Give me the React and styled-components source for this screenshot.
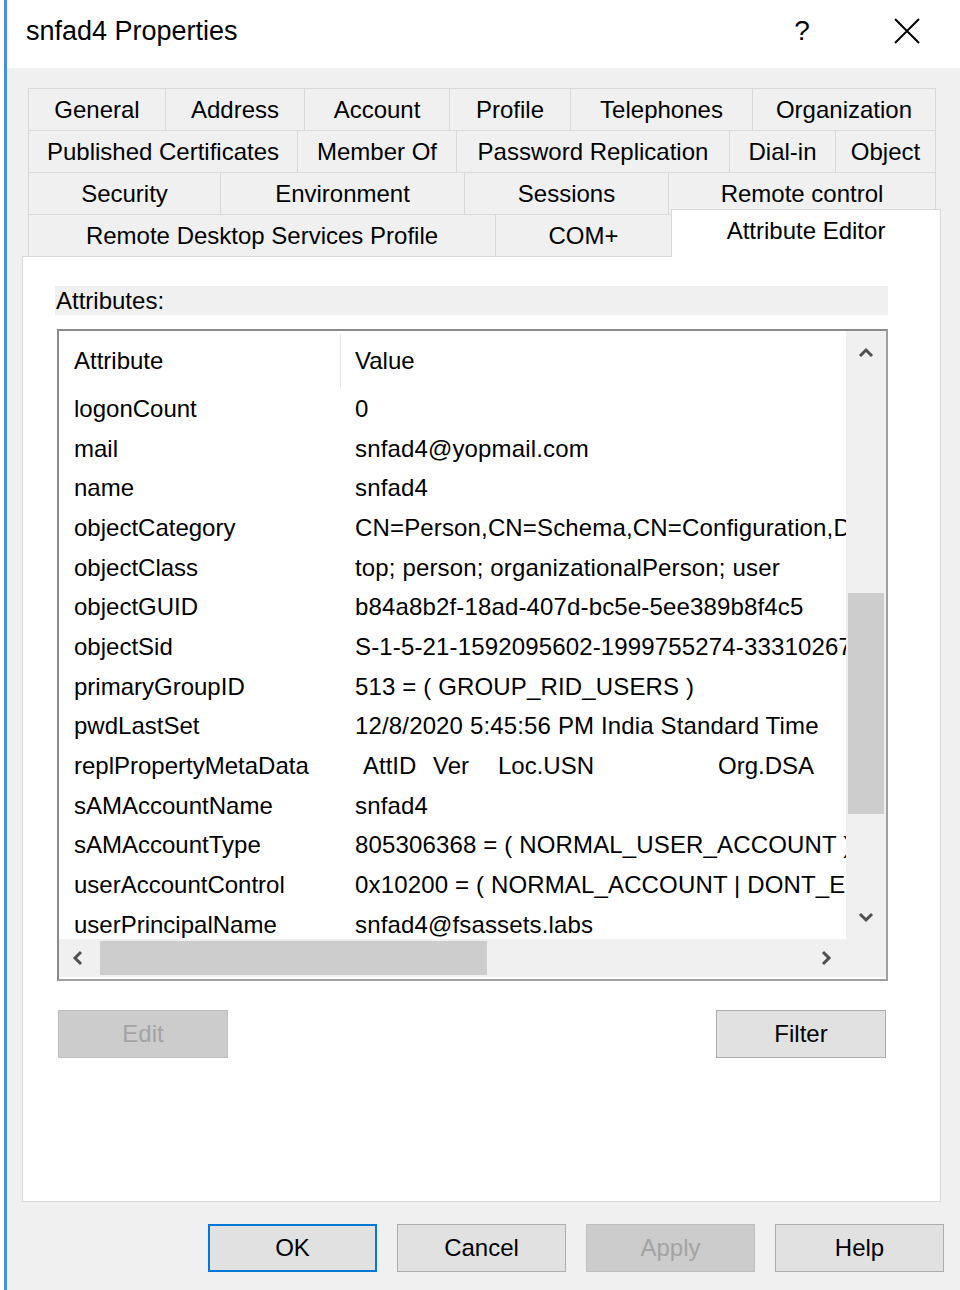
import styled, { createGlobalStyle } from 'styled-components';

const FONT = `"Liberation Sans", Arial, sans-serif`;

const GlobalStyle = createGlobalStyle`
  html, body {
    margin: 0;
    padding: 0;
    background: #ffffff;
  }
  * {
    box-sizing: border-box;
  }
`;

const Window = styled.div`
  margin-left: 4px;
  width: 956px;
  height: 1290px;
  border-left: 3px solid #4a8fdf;
  display: flex;
  flex-direction: column;
  font-family: ${FONT};
  color: #000;
`;

const TitleBar = styled.div`
  height: 68px;
  background: #fff;
  display: flex;
  align-items: center;
  padding: 0 3px 6px 19px;
`;

const Title = styled.div`
  flex: 1;
  font-size: 27px;
`;

const CaptionButton = styled.div`
  width: ${(p) => p.$w}px;
  height: 50px;
  display: flex;
  align-items: center;
  justify-content: center;
  font-size: 28px;
`;

const Body = styled.div`
  flex: 1;
  background: #f0f0f0;
  display: flex;
  flex-direction: column;
  padding: 20px 19px 0 15px;
`;

const Tabs = styled.div`
  display: flex;
  flex-direction: column;
  padding-left: 6px;
`;

const TabRow = styled.div`
  display: flex;
  height: 42px;
  align-items: flex-end;
`;

const Tab = styled.div`
  width: ${(p) => p.$w}px;
  height: 42px;
  border-top: 1px solid #d9d9d9;
  border-left: 1px solid #d9d9d9;
  background: #f0f0f0;
  display: flex;
  align-items: center;
  justify-content: center;
  font-size: 24px;
  white-space: nowrap;
  &:last-child {
    border-right: 1px solid #d9d9d9;
  }
`;

const ActiveTab = styled(Tab)`
  height: 48px;
  margin-bottom: -1px;
  background: #fff;
  border: 1px solid #d9d9d9;
  border-bottom: none;
  position: relative;
  z-index: 1;
  padding-bottom: 6px;
`;

const Panel = styled.div`
  height: 946px;
  background: #fff;
  border: 1px solid #d9d9d9;
  padding: 29px 0 0 32px;
  display: flex;
  flex-direction: column;
`;

const GroupLabel = styled.div`
  width: 833px;
  height: 29px;
  background: #f0f0f0;
  font-size: 24px;
  line-height: 29px;
  padding-left: 1px;
`;

const ListBox = styled.div`
  margin: 14px 0 0 2px;
  width: 831px;
  height: 652px;
  border: 2px solid #9a9a9a;
  border-color: #8a8a8a #a0a0a0 #a0a0a0 #8a8a8a;
  display: grid;
  grid-template-columns: 1fr 40px;
  grid-template-rows: 1fr 38px;
  padding-bottom: 2px;
  background: #fff;
`;

const Viewport = styled.div`
  overflow: hidden;
  padding-top: 3px;
  font-size: 24px;
`;

const HeaderRow = styled.div`
  display: grid;
  grid-template-columns: 281px 1fr;
  height: 55px;
  align-items: center;
  padding-bottom: 2px;
`;

const HeaderCell = styled.div`
  height: 100%;
  display: flex;
  align-items: center;
  padding-left: ${(p) => p.$pad}px;
  border-left: ${(p) => (p.$sep ? '1px solid #e5e5e5' : 'none')};
`;

const Row = styled.div`
  display: grid;
  grid-template-columns: 281px 1fr;
  height: 39.7px;
  align-items: center;
  white-space: nowrap;
`;

const NameCell = styled.div`
  padding-left: 15px;
`;

const ValueCell = styled.div`
  padding-left: 15px;
  display: flex;
  letter-spacing: ${(p) => (p.$tight ? '0.15px' : '0')};
`;

const MetaCol = styled.span`
  display: inline-block;
  width: ${(p) => p.$w}px;
  padding-left: ${(p) => p.$pad || 0}px;
  flex-shrink: 0;
`;

const VScroll = styled.div`
  background: #f0f0f0;
  display: flex;
  flex-direction: column;
`;

const HScroll = styled.div`
  background: #f0f0f0;
  display: flex;
  align-items: stretch;
`;

const Corner = styled.div`
  background: #f0f0f0;
`;

const Arrow = styled.div`
  flex: 0 0 ${(p) => p.$size}px;
  display: flex;
  align-items: center;
  justify-content: center;
`;

const VThumb = styled.div`
  margin: ${(p) => p.$offset}px 2px 0;
  height: ${(p) => p.$len}px;
  background: #cdcdcd;
`;

const HThumb = styled.div`
  margin: 2px 0 2px ${(p) => p.$offset}px;
  width: ${(p) => p.$len}px;
  background: #cdcdcd;
`;

const Spacer = styled.div`
  flex: 1;
`;

const ButtonRow = styled.div`
  display: flex;
  justify-content: space-between;
  width: 828px;
  margin: 29px 0 0 3px;
`;

const Button = styled.div`
  width: ${(p) => p.$w || 170}px;
  height: 48px;
  display: flex;
  align-items: center;
  justify-content: center;
  font-size: 24px;
  background: ${(p) => (p.$disabled ? '#cccccc' : '#e1e1e1')};
  color: ${(p) => (p.$disabled ? '#a3a3a3' : '#000')};
  border: ${(p) =>
    p.$default ? '2px solid #0078d7' : `1px solid ${p.$disabled ? '#bfbfbf' : '#adadad'}`};
`;

const Footer = styled.div`
  display: flex;
  justify-content: flex-end;
  gap: 20px;
  padding: 22px 0 0;
  margin-right: -3px;
`;

const Chevron = ({ dir }) => {
  const pts = {
    up: '2,11 8,5 14,11',
    down: '2,5 8,11 14,5',
    left: '10,2 4,8 10,14',
    right: '5,2 11,8 5,14',
  }[dir];
  return (
    <svg width="16" height="16" viewBox="0 0 16 16">
      <polyline points={pts} fill="none" stroke="#505050" strokeWidth="3" />
    </svg>
  );
};

const tabRows = [
  [
    ['General', 137],
    ['Address', 139],
    ['Account', 145],
    ['Profile', 121],
    ['Telephones', 182],
    ['Organization', 184],
  ],
  [
    ['Published Certificates', 269],
    ['Member Of', 159],
    ['Password Replication', 273],
    ['Dial-in', 106],
    ['Object', 101],
  ],
  [
    ['Security', 192],
    ['Environment', 244],
    ['Sessions', 204],
    ['Remote control', 268],
  ],
];

const attributes = [
  ['logonCount', '0'],
  ['mail', 'snfad4@yopmail.com'],
  ['name', 'snfad4'],
  ['objectCategory', 'CN=Person,CN=Schema,CN=Configuration,DC=fsassets,DC=labs'],
  ['objectClass', 'top; person; organizationalPerson; user'],
  ['objectGUID', 'b84a8b2f-18ad-407d-bc5e-5ee389b8f4c5'],
  ['objectSid', 'S-1-5-21-1592095602-1999755274-3331026784-1106'],
  ['primaryGroupID', '513 = ( GROUP_RID_USERS )'],
  ['pwdLastSet', '12/8/2020 5:45:56 PM India Standard Time'],
  ['replPropertyMetaData', null],
  ['sAMAccountName', 'snfad4'],
  ['sAMAccountType', '805306368 = ( NORMAL_USER_ACCOUNT )'],
  ['userAccountControl', '0x10200 = ( NORMAL_ACCOUNT | DONT_EXPIRE_PASSWD )'],
  ['userPrincipalName', 'snfad4@fsassets.labs'],
];

function App() {
  return (
    <>
      <GlobalStyle />
      <Window>
        <TitleBar>
          <Title>snfad4 Properties</Title>
          <CaptionButton $w={110}>?</CaptionButton>
          <CaptionButton $w={100}>
            <svg width="26" height="26" viewBox="0 0 26 26">
              <path d="M1 1 L25 25 M25 1 L1 25" stroke="#000" strokeWidth="2" />
            </svg>
          </CaptionButton>
        </TitleBar>
        <Body>
          <Tabs>
            {tabRows.map((row, i) => (
              <TabRow key={i}>
                {row.map(([label, w]) => (
                  <Tab key={label} $w={w}>
                    {label}
                  </Tab>
                ))}
              </TabRow>
            ))}
            <TabRow>
              <Tab $w={467}>Remote Desktop Services Profile</Tab>
              <Tab $w={176}>COM+</Tab>
              <ActiveTab $w={270}>Attribute Editor</ActiveTab>
            </TabRow>
          </Tabs>
          <Panel>
            <GroupLabel>Attributes:</GroupLabel>
            <ListBox>
              <Viewport>
                <HeaderRow>
                  <HeaderCell $pad={15}>Attribute</HeaderCell>
                  <HeaderCell $pad={14} $sep>
                    Value
                  </HeaderCell>
                </HeaderRow>
                {attributes.map(([name, value]) => (
                  <Row key={name}>
                    <NameCell>{name}</NameCell>
                    {value === null ? (
                      <ValueCell>
                        <MetaCol $w={78} $pad={8}>
                          AttID
                        </MetaCol>
                        <MetaCol $w={65}>Ver</MetaCol>
                        <MetaCol $w={220}>Loc.USN</MetaCol>
                        <MetaCol $w={120}>Org.DSA</MetaCol>
                      </ValueCell>
                    ) : (
                      <ValueCell $tight>{value}</ValueCell>
                    )}
                  </Row>
                ))}
              </Viewport>
              <VScroll>
                <Arrow $size={44}>
                  <Chevron dir="up" />
                </Arrow>
                <VThumb $offset={218} $len={221} />
                <Spacer />
                <Arrow $size={44}>
                  <Chevron dir="down" />
                </Arrow>
              </VScroll>
              <HScroll>
                <Arrow $size={40}>
                  <Chevron dir="left" />
                </Arrow>
                <HThumb $offset={1} $len={387} />
                <Spacer />
                <Arrow $size={40}>
                  <Chevron dir="right" />
                </Arrow>
              </HScroll>
              <Corner />
            </ListBox>
            <ButtonRow>
              <Button $disabled>Edit</Button>
              <Button>Filter</Button>
            </ButtonRow>
          </Panel>
          <Footer>
            <Button $w={169} $default>
              OK
            </Button>
            <Button $w={169}>Cancel</Button>
            <Button $w={169} $disabled>
              Apply
            </Button>
            <Button $w={169}>Help</Button>
          </Footer>
        </Body>
      </Window>
    </>
  );
}

export default App;
